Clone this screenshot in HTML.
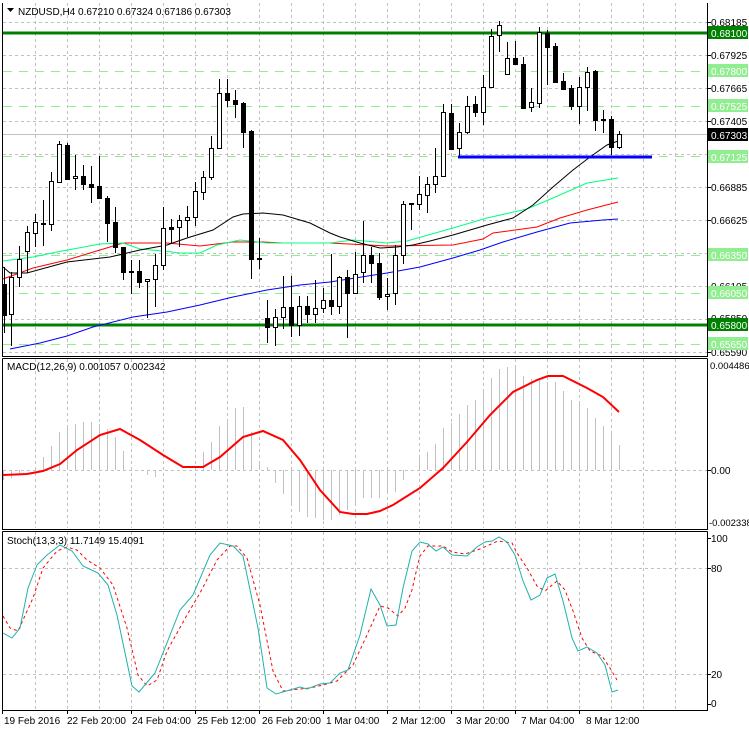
<!DOCTYPE html>
<html><head><meta charset="utf-8"><style>
html,body{margin:0;padding:0;background:#fff;}
svg{display:block;font-family:"Liberation Sans",sans-serif;font-size:10px;}
.g{stroke:#c0c0c0;stroke-dasharray:3 3;stroke-width:1;fill:none}
.lg{stroke:#90ee90;stroke-dasharray:9 7;stroke-width:1;fill:none}
.w{fill:#fff;stroke:#000;stroke-width:1}
.b{fill:#000;stroke:#000;stroke-width:1}
</style></head><body>
<svg width="749" height="731" viewBox="0 0 749 731" xmlns="http://www.w3.org/2000/svg">
<rect width="749" height="731" fill="#fff"/>
<path class="g" d="M35.5 3V356M67.5 3V356M99.5 3V356M131.5 3V356M163.5 3V356M195.5 3V356M227.5 3V356M259.5 3V356M291.5 3V356M323.5 3V356M355.5 3V356M387.5 3V356M419.5 3V356M451.5 3V356M483.5 3V356M515.5 3V356M547.5 3V356M579.5 3V356M611.5 3V356M643.5 3V356M675.5 3V356
M35.5 359V528M67.5 359V528M99.5 359V528M131.5 359V528M163.5 359V528M195.5 359V528M227.5 359V528M259.5 359V528M291.5 359V528M323.5 359V528M355.5 359V528M387.5 359V528M419.5 359V528M451.5 359V528M483.5 359V528M515.5 359V528M547.5 359V528M579.5 359V528M611.5 359V528M643.5 359V528M675.5 359V528
M35.5 532V709M67.5 532V709M99.5 532V709M131.5 532V709M163.5 532V709M195.5 532V709M227.5 532V709M259.5 532V709M291.5 532V709M323.5 532V709M355.5 532V709M387.5 532V709M419.5 532V709M451.5 532V709M483.5 532V709M515.5 532V709M547.5 532V709M579.5 532V709M611.5 532V709M643.5 532V709M675.5 532V709"/>
<path class="g" d="M3 22.5H707M3 55.5H707M3 88.5H707M3 121.5H707M3 154.5H707M3 187.5H707M3 220.5H707M3 253.5H707M3 286.5H707M3 319.5H707M3 352.5H707M3 470.5H707M3 568.5H707M3 674.5H707"/>
<path class="lg" d="M3 71.5H707M3 106.5H707M3 156.5H707M3 255.5H707M3 293.5H707M3 344.5H707"/>
<path d="M3 134.5H707" stroke="#c0c0c0" fill="none"/>
<path d="M3 33H707M3 325H707" stroke="#008000" stroke-width="3" fill="none"/>

<polyline fill="none" stroke="#0000ff" points="10,349 40,343 67,336 93,327 133,317 167,312 200,305 233,297 267,290 300,285 330,282 387,273 420,267 453,258 480,250 503,242 537,232 570,223 603,220 618,219"/>
<polyline fill="none" stroke="#ff0000" points="3,279 33,268 67,260 100,250 123,243 167,243 200,246 233,242 263,242 283,243 330,243 387,246 453,245 483,239 493,233 537,227 560,218 587,210 618,202"/>
<polyline fill="none" stroke="#00ff7f" points="3,261 33,257 57,252 100,244 123,243 140,249 163,251 180,253 200,253 217,245 240,240 267,243 300,243 330,243 353,240 387,243 407,241 453,228 487,218 527,209 553,198 587,183 618,178"/>
<polyline fill="none" stroke="#000" points="3,267 10,273 27,273 67,262 110,257 140,250 167,245 187,238 213,230 233,217 243,214 263,213 283,215 310,223 330,233 340,237 360,243 380,248 397,247 413,245 430,241 453,235 487,225 513,218 533,205 553,187 573,170 590,157 607,145 618,141"/>

<path stroke="#000" fill="none" d="M4.5 267V333M11.5 272V346M19.5 246V287M27.5 226V273M35.5 214V247M43.5 200V246M51.5 172V231M59.5 141V183M67.5 143V180M75.5 155V190M83.5 165V190M91.5 166V203M99.5 156V198M107.5 196V242M115.5 207V253M123.5 247V280M131.5 260V294M139.5 260V288M147.5 279V318M155.5 254V307M163.5 207V270M171.5 219V243M179.5 215V247M187.5 206V237M195.5 182V226M203.5 171V200M211.5 136V180M219.5 79V148M227.5 79V107M235.5 90V118M243.5 102V148M251.5 130V279M259.5 238V269M267.5 300V343M275.5 309V346M283.5 276V329M291.5 276V337M299.5 296V336M307.5 296V323M315.5 280V323M323.5 288V313M331.5 254V315M339.5 276V314M347.5 270V338M355.5 252V293M363.5 221V283M371.5 247V283M379.5 253V300M387.5 278V310M395.5 245V305M403.5 201V264M411.5 203V230M419.5 176V210M427.5 177V213M435.5 148V193M443.5 104V176M451.5 104V149M459.5 123V157M467.5 96V134M475.5 96V117M483.5 75V125M491.5 29V87M499.5 21V52M507.5 42V74M515.5 41V64M523.5 57V109M531.5 88V112M539.5 27V108M547.5 30V85M555.5 43V83M563.5 73V89M571.5 85V110M579.5 77V124M587.5 67V111M595.5 70V131M603.5 110V133M611.5 116V155M619.5 131V149"/>
<g>
<rect class="b" x="2.5" y="284.5" width="4" height="31"/>
<rect class="w" x="9.5" y="277.5" width="4" height="37"/>
<rect class="w" x="17.5" y="259.5" width="4" height="18"/>
<rect class="w" x="25.5" y="232.5" width="4" height="19"/>
<rect class="w" x="33.5" y="222.5" width="4" height="11"/>
<rect class="b" x="41.5" y="223.5" width="4" height="1"/>
<rect class="w" x="49.5" y="181.5" width="4" height="43"/>
<rect class="w" x="57.5" y="144.5" width="4" height="38"/>
<rect class="b" x="65.5" y="145.5" width="4" height="34"/>
<rect class="w" x="73.5" y="176.5" width="4" height="2"/>
<rect class="b" x="81.5" y="176.5" width="4" height="8"/>
<rect class="b" x="89.5" y="184.5" width="4" height="3"/>
<rect class="b" x="97.5" y="186.5" width="4" height="12"/>
<rect class="b" x="105.5" y="198.5" width="4" height="25"/>
<rect class="b" x="113.5" y="222.5" width="4" height="25"/>
<rect class="b" x="121.5" y="247.5" width="4" height="25"/>
<rect class="b" x="129.5" y="271.5" width="4" height="1"/>
<rect class="b" x="137.5" y="271.5" width="4" height="11"/>
<rect class="w" x="145.5" y="279.5" width="4" height="2"/>
<rect class="w" x="153.5" y="265.5" width="4" height="14"/>
<rect class="w" x="161.5" y="228.5" width="4" height="37"/>
<rect class="b" x="169.5" y="227.5" width="4" height="2"/>
<rect class="w" x="177.5" y="220.5" width="4" height="7"/>
<rect class="w" x="185.5" y="217.5" width="4" height="3"/>
<rect class="w" x="193.5" y="191.5" width="4" height="26"/>
<rect class="w" x="201.5" y="177.5" width="4" height="15"/>
<rect class="w" x="209.5" y="148.5" width="4" height="29"/>
<rect class="w" x="217.5" y="93.5" width="4" height="55"/>
<rect class="b" x="225.5" y="93.5" width="4" height="7"/>
<rect class="b" x="233.5" y="100.5" width="4" height="4"/>
<rect class="b" x="241.5" y="103.5" width="4" height="29"/>
<rect class="b" x="249.5" y="131.5" width="4" height="128"/>
<rect class="b" x="257.5" y="258.5" width="4" height="1"/>
<rect class="b" x="265.5" y="318.5" width="4" height="9"/>
<rect class="w" x="273.5" y="317.5" width="4" height="10"/>
<rect class="w" x="281.5" y="307.5" width="4" height="10"/>
<rect class="b" x="289.5" y="307.5" width="4" height="18"/>
<rect class="w" x="297.5" y="306.5" width="4" height="19"/>
<rect class="b" x="305.5" y="306.5" width="4" height="8"/>
<rect class="w" x="313.5" y="308.5" width="4" height="6"/>
<rect class="w" x="321.5" y="300.5" width="4" height="8"/>
<rect class="b" x="329.5" y="300.5" width="4" height="6"/>
<rect class="w" x="337.5" y="277.5" width="4" height="29"/>
<rect class="b" x="345.5" y="277.5" width="4" height="16"/>
<rect class="w" x="353.5" y="274.5" width="4" height="19"/>
<rect class="w" x="361.5" y="255.5" width="4" height="17"/>
<rect class="b" x="369.5" y="255.5" width="4" height="8"/>
<rect class="b" x="377.5" y="263.5" width="4" height="34"/>
<rect class="w" x="385.5" y="294.5" width="4" height="2"/>
<rect class="w" x="393.5" y="255.5" width="4" height="38"/>
<rect class="w" x="401.5" y="204.5" width="4" height="51"/>
<rect class="w" x="409.5" y="203.5" width="4" height="1"/>
<rect class="w" x="417.5" y="194.5" width="4" height="10"/>
<rect class="w" x="425.5" y="184.5" width="4" height="11"/>
<rect class="w" x="433.5" y="176.5" width="4" height="8"/>
<rect class="w" x="441.5" y="112.5" width="4" height="64"/>
<rect class="b" x="449.5" y="113.5" width="4" height="36"/>
<rect class="w" x="457.5" y="132.5" width="4" height="16"/>
<rect class="w" x="465.5" y="106.5" width="4" height="26"/>
<rect class="b" x="473.5" y="104.5" width="4" height="8"/>
<rect class="w" x="481.5" y="87.5" width="4" height="25"/>
<rect class="w" x="489.5" y="36.5" width="4" height="51"/>
<rect class="w" x="497.5" y="25.5" width="4" height="10"/>
<rect class="w" x="505.5" y="58.5" width="4" height="16"/>
<rect class="b" x="513.5" y="58.5" width="4" height="6"/>
<rect class="b" x="521.5" y="64.5" width="4" height="44"/>
<rect class="w" x="529.5" y="102.5" width="4" height="5"/>
<rect class="w" x="537.5" y="32.5" width="4" height="71"/>
<rect class="b" x="545.5" y="33.5" width="4" height="14"/>
<rect class="b" x="553.5" y="46.5" width="4" height="36"/>
<rect class="b" x="561.5" y="81.5" width="4" height="8"/>
<rect class="b" x="569.5" y="88.5" width="4" height="18"/>
<rect class="w" x="577.5" y="87.5" width="4" height="19"/>
<rect class="w" x="585.5" y="72.5" width="4" height="15"/>
<rect class="b" x="593.5" y="71.5" width="4" height="49"/>
<rect class="b" x="601.5" y="119.5" width="4" height="1"/>
<rect class="b" x="609.5" y="119.5" width="4" height="28"/>
<rect class="w" x="617.5" y="134.5" width="4" height="13"/>
</g>
<path d="M458 157H652" stroke="#0000ff" stroke-width="3"/>

<path stroke="#c0c0c0" fill="none" d="M3.5 470V480M11.5 470V478M19.5 470V473M35.5 470V468M43.5 470V457M51.5 470V446M59.5 470V432M67.5 470V427M75.5 470V424M83.5 470V422M91.5 470V422M99.5 470V424M107.5 470V429M115.5 470V437M123.5 470V451M131.5 470V467M147.5 470V475M155.5 470V477M203.5 470V452M211.5 470V442M219.5 470V426M227.5 470V419M235.5 470V408M243.5 470V407M251.5 470V432M259.5 470V461M267.5 470V467M275.5 470V483M283.5 470V494M291.5 470V505M299.5 470V512M307.5 470V517M315.5 470V518M323.5 470V520M331.5 470V520M339.5 470V515M347.5 470V510M355.5 470V503M363.5 470V498M371.5 470V498M379.5 470V498M387.5 470V491M395.5 470V492M403.5 470V480M419.5 470V458M427.5 470V452M435.5 470V444M443.5 470V428M451.5 470V423M459.5 470V414M467.5 470V405M475.5 470V400M483.5 470V392M491.5 470V378M499.5 470V369M507.5 470V367M515.5 470V368M523.5 470V376M531.5 470V379M539.5 470V379M547.5 470V382M555.5 470V382M563.5 470V391M571.5 470V400M579.5 470V404M587.5 470V408M595.5 470V418M603.5 470V426M611.5 470V434M619.5 470V445"/>
<polyline fill="none" stroke="#ff0000" stroke-width="2" points="3,475 27,474 43,471 60,464 77,450 100,435 120,429 140,440 163,455 183,467 203,467 220,457 243,437 263,431 283,440 300,460 320,490 340,512 353,514 367,514 380,511 393,505 420,488 443,468 467,442 490,415 513,392 537,380 548,376 563,376 587,388 603,397 619,412"/>

<polyline fill="none" stroke="#ff0000" stroke-dasharray="3 3" points="3,616 10,628 18,631 33,598 43,568 57,551 67,547 77,550 87,560 100,568 113,585 127,628 138,675 147,686 157,680 167,651 187,615 200,593 217,560 230,546 237,546 247,558 260,605 273,671 283,691 300,689 310,688 323,685 337,681 353,665 367,635 380,606 388,608 398,616 405,608 412,590 417,568 420,556 428,546 443,546 452,552 465,554 480,549 498,541 512,543 517,553 527,568 537,586 545,591 557,581 565,590 573,611 582,638 590,651 602,656 610,668 617,680"/>
<polyline fill="none" stroke="#20b2aa" points="3,633 12,638 20,628 28,588 37,565 47,555 60,545 72,551 83,566 98,573 108,585 117,615 132,686 139,692 155,673 180,610 193,595 210,555 220,543 233,546 243,556 258,628 267,688 276,694 290,690 300,687 307,689 320,684 330,683 340,673 348,670 360,635 371,589 380,605 387,626 396,625 403,588 412,551 420,542 428,544 436,551 443,547 452,555 467,556 477,547 485,542 492,541 499,537 507,542 515,555 523,581 531,600 540,595 547,578 555,574 563,601 572,638 578,651 587,647 597,653 605,665 612,692 618,690"/>

<path stroke="#000" fill="none" d="M2.5 3V356.5H707.5V3M2.5 358.5H707.5M2.5 358.5V529.5H707.5V358.5M2.5 531.5H707.5M2.5 531.5V710.5H707.5V531.5"/>
<path stroke="#000" fill="none" d="M2.5 710V714M67.5 710V714M131.5 710V714M195.5 710V714M259.5 710V714M323.5 710V714M387.5 710V714M451.5 710V714M515.5 710V714M579.5 710V714M707 22.5H711M707 55.5H711M707 88.5H711M707 121.5H711M707 187.5H711M707 220.5H711M707 286.5H711M707 352.5H711M707 470.5H711M707 538.5H711M707 568.5H711M707 674.5H711M707 704.5H711"/>

<path d="M7 8H14L10.5 12Z" fill="#000"/>
<text x="18" y="15" fill="#000">NZDUSD,H4  0.67210 0.67324 0.67186 0.67303</text>
<text x="7" y="370" fill="#000">MACD(12,26,9) 0.001057 0.002342</text>
<text x="7" y="544" fill="#000">Stoch(13,3,3) 11.7149 15.4091</text>

<g fill="#000">
<text x="711" y="26">0.68185</text>
<text x="711" y="59">0.67925</text>
<text x="711" y="92">0.67665</text>
<text x="711" y="125">0.67405</text>
<text x="711" y="191">0.66885</text>
<text x="711" y="224">0.66625</text>
<text x="711" y="290">0.66105</text>
<text x="711" y="322">0.65850</text>
<text x="711" y="356">0.65590</text>
</g>
<rect x="708" y="26" width="40" height="13" fill="#008000"/><text x="711" y="37" fill="#fff">0.68100</text>
<rect x="708" y="64" width="40" height="13" fill="#90ee90"/><text x="711" y="75" fill="#fff">0.67800</text>
<rect x="708" y="99" width="40" height="13" fill="#90ee90"/><text x="711" y="110" fill="#fff">0.67525</text>
<rect x="708" y="128" width="40" height="13" fill="#000"/><text x="711" y="139" fill="#fff">0.67303</text>
<rect x="708" y="150" width="40" height="13" fill="#90ee90"/><text x="711" y="161" fill="#fff">0.67125</text>
<rect x="708" y="248" width="40" height="13" fill="#90ee90"/><text x="711" y="259" fill="#fff">0.66350</text>
<rect x="708" y="286" width="40" height="13" fill="#90ee90"/><text x="711" y="297" fill="#fff">0.66050</text>
<rect x="708" y="318" width="40" height="13" fill="#008000"/><text x="711" y="329" fill="#fff">0.65800</text>
<rect x="708" y="337" width="40" height="13" fill="#90ee90"/><text x="711" y="348" fill="#fff">0.65650</text>
<g fill="#000">
<text x="710" y="369" style="font-size:9.5px">0.004486</text>
<text x="711" y="474">0.00</text>
<text x="709" y="526" style="font-size:9.5px">-0.002338</text>
<text x="711" y="542">100</text>
<text x="711" y="572">80</text>
<text x="711" y="678">20</text>
<text x="711" y="707">0</text>
</g>
<g fill="#000">
<text x="4" y="724">19 Feb 2016</text>
<text x="67" y="724">22 Feb 20:00</text>
<text x="132" y="724">24 Feb 04:00</text>
<text x="197" y="724">25 Feb 12:00</text>
<text x="262" y="724">26 Feb 20:00</text>
<text x="326" y="724">1 Mar 04:00</text>
<text x="392" y="724">2 Mar 12:00</text>
<text x="456" y="724">3 Mar 20:00</text>
<text x="521" y="724">7 Mar 04:00</text>
<text x="586" y="724">8 Mar 12:00</text>
</g>
</svg>
</body></html>
